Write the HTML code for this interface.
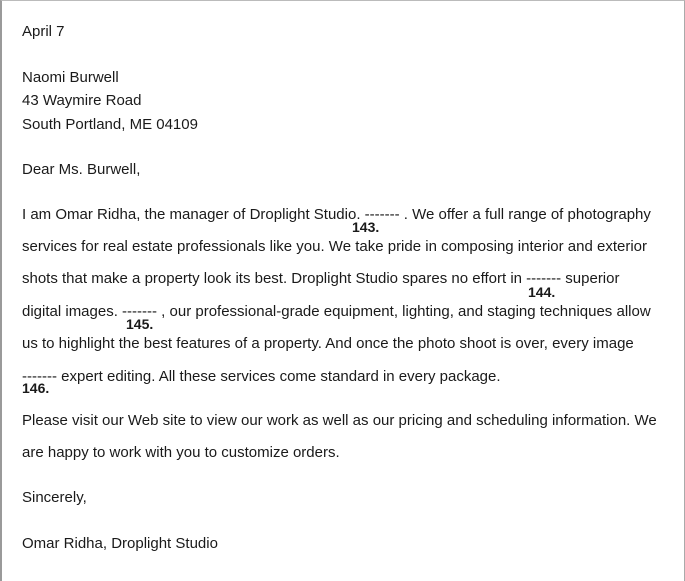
<!DOCTYPE html>
<html><head><meta charset="utf-8"><style>
html,body{margin:0;padding:0;background:#fff}
body{width:685px;height:574px;position:relative;overflow:hidden;font-family:"Liberation Sans",Arial,sans-serif;font-size:15px;color:#1a1a1a}
.frame{position:absolute;left:0;top:0;width:682px;height:580px;border-left:2px solid #9a9a9a;border-top:1px solid #bbb;border-right:1px solid #aaa}
.l{position:absolute;left:22px;line-height:18px;white-space:nowrap}
.n{position:absolute;font-weight:bold;font-size:14px;line-height:16px;white-space:nowrap}
</style></head><body>
<div class="frame"></div>
<div class="l" style="top:23px">April 7</div>
<div class="l" style="top:69px">Naomi Burwell</div>
<div class="l" style="top:92px">43 Waymire Road</div>
<div class="l" style="top:116px">South Portland, ME 04109</div>
<div class="l" style="top:161px">Dear Ms. Burwell,</div>
<div class="l" style="top:206px">I am Omar Ridha, the manager of Droplight Studio. ------- . We offer a full range of photography</div>
<div class="n" style="left:352px;top:219px">143.</div>
<div class="l" style="top:238px">services for real estate professionals like you. We take pride in composing interior and exterior</div>
<div class="l" style="top:270px">shots that make a property look its best. Droplight Studio spares no effort in ------- superior</div>
<div class="n" style="left:528px;top:284px">144.</div>
<div class="l" style="top:303px">digital images. ------- , our professional-grade equipment, lighting, and staging techniques allow</div>
<div class="n" style="left:126px;top:316px">145.</div>
<div class="l" style="top:335px">us to highlight the best features of a property. And once the photo shoot is over, every image</div>
<div class="l" style="top:368px">------- expert editing. All these services come standard in every package.</div>
<div class="n" style="left:22px;top:380px">146.</div>
<div class="l" style="top:412px">Please visit our Web site to view our work as well as our pricing and scheduling information. We</div>
<div class="l" style="top:444px">are happy to work with you to customize orders.</div>
<div class="l" style="top:489px">Sincerely,</div>
<div class="l" style="top:535px">Omar Ridha, Droplight Studio</div>
</body></html>
